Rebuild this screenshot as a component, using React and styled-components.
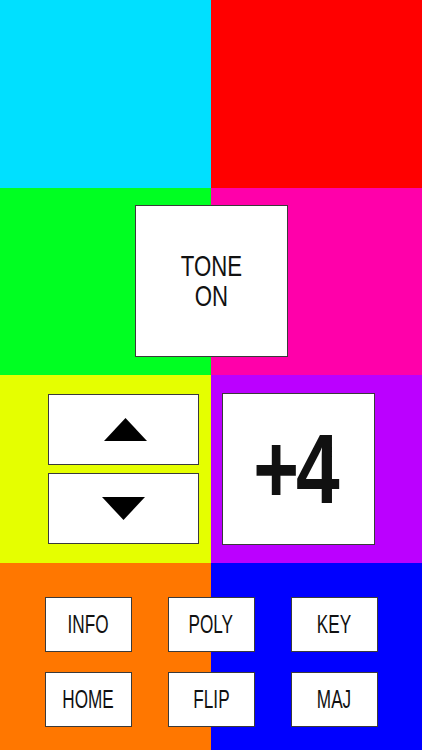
import React from "react";
import styled, { createGlobalStyle } from "styled-components";

const Global = createGlobalStyle`
  html, body { margin: 0; padding: 0; }
  body { font-family: "Liberation Sans", Arial, sans-serif; }
  * { box-sizing: border-box; }
`;

const Screen = styled.div`
  width: 422px;
  height: 750px;
  display: grid;
  grid-template-rows: repeat(4, 1fr);
  overflow: hidden;
`;

const Band = styled.section`
  display: flex;
  justify-content: center;
  align-items: ${(p) => p.$align || "center"};
  padding-top: ${(p) => p.$padTop || 0}px;
  background: linear-gradient(
    to right,
    ${(p) => p.$left} 0,
    ${(p) => p.$left} 211px,
    ${(p) => p.$right} 211px,
    ${(p) => p.$right} 100%
  );
`;

const Panel = styled.div`
  background: #fff;
  border: 1px solid #3a3a3a;
  display: flex;
  align-items: center;
  justify-content: center;
  color: #111;
`;

const ToneBox = styled(Panel)`
  width: 153px;
  height: 152px;
`;

const Squeeze = styled.span`
  display: inline-block;
  transform: scaleX(${(p) => p.$sx});
  white-space: nowrap;
  text-align: center;
`;

const ToneText = styled(Squeeze)`
  font-size: 30px;
  line-height: 30px;
  font-weight: 400;
`;

const Controls = styled.div`
  display: flex;
  gap: 23px;
  align-items: center;
`;

const ArrowStack = styled.div`
  display: flex;
  flex-direction: column;
  gap: 8px;
`;

const ArrowButton = styled(Panel)`
  width: 151px;
  height: 71px;
  padding-left: ${(p) => p.$shift || 0}px;
`;

const ValueBox = styled(Panel)`
  width: 153px;
  height: 152px;
  padding-right: 7px;
`;

const ValueText = styled(Squeeze)`
  font-size: 98px;
  line-height: 1;
  font-weight: 700;
  letter-spacing: -4px;
`;

const ButtonGrid = styled.div`
  display: grid;
  grid-template-columns: repeat(3, 87px);
  grid-auto-rows: 55px;
  column-gap: 36px;
  row-gap: 20px;
`;

const KeyButton = styled(Panel)`
  width: 87px;
  height: 55px;
`;

const KeyText = styled(Squeeze)`
  font-size: 26px;
  line-height: 1;
`;

const Triangle = ({ up }) => (
  <svg width="43" height="23" viewBox="0 0 43 23">
    <polygon points={up ? "21.5,0 43,23 0,23" : "0,0 43,0 21.5,23"} fill="#000" />
  </svg>
);

const keys = ["INFO", "POLY", "KEY", "HOME", "FLIP", "MAJ"];

export default function App() {
  return (
    <>
      <Global />
      <Screen>
        <Band $left="#00E0FF" $right="#FF0000" />
        <Band $left="#00FF22" $right="#FF00AA">
          <ToneBox>
            <ToneText $sx={0.74}>
              TONE
              <br />
              ON
            </ToneText>
          </ToneBox>
        </Band>
        <Band $left="#E5FF00" $right="#BB00FF">
          <Controls>
            <ArrowStack>
              <ArrowButton $shift={4}>
                <Triangle up />
              </ArrowButton>
              <ArrowButton>
                <Triangle />
              </ArrowButton>
            </ArrowStack>
            <ValueBox>
              <ValueText $sx={0.8}>+4</ValueText>
            </ValueBox>
          </Controls>
        </Band>
        <Band $left="#FF7700" $right="#0000FF" $align="flex-start" $padTop={34}>
          <ButtonGrid>
            {keys.map((k) => (
              <KeyButton key={k}>
                <KeyText $sx={0.66}>{k}</KeyText>
              </KeyButton>
            ))}
          </ButtonGrid>
        </Band>
      </Screen>
    </>
  );
}
